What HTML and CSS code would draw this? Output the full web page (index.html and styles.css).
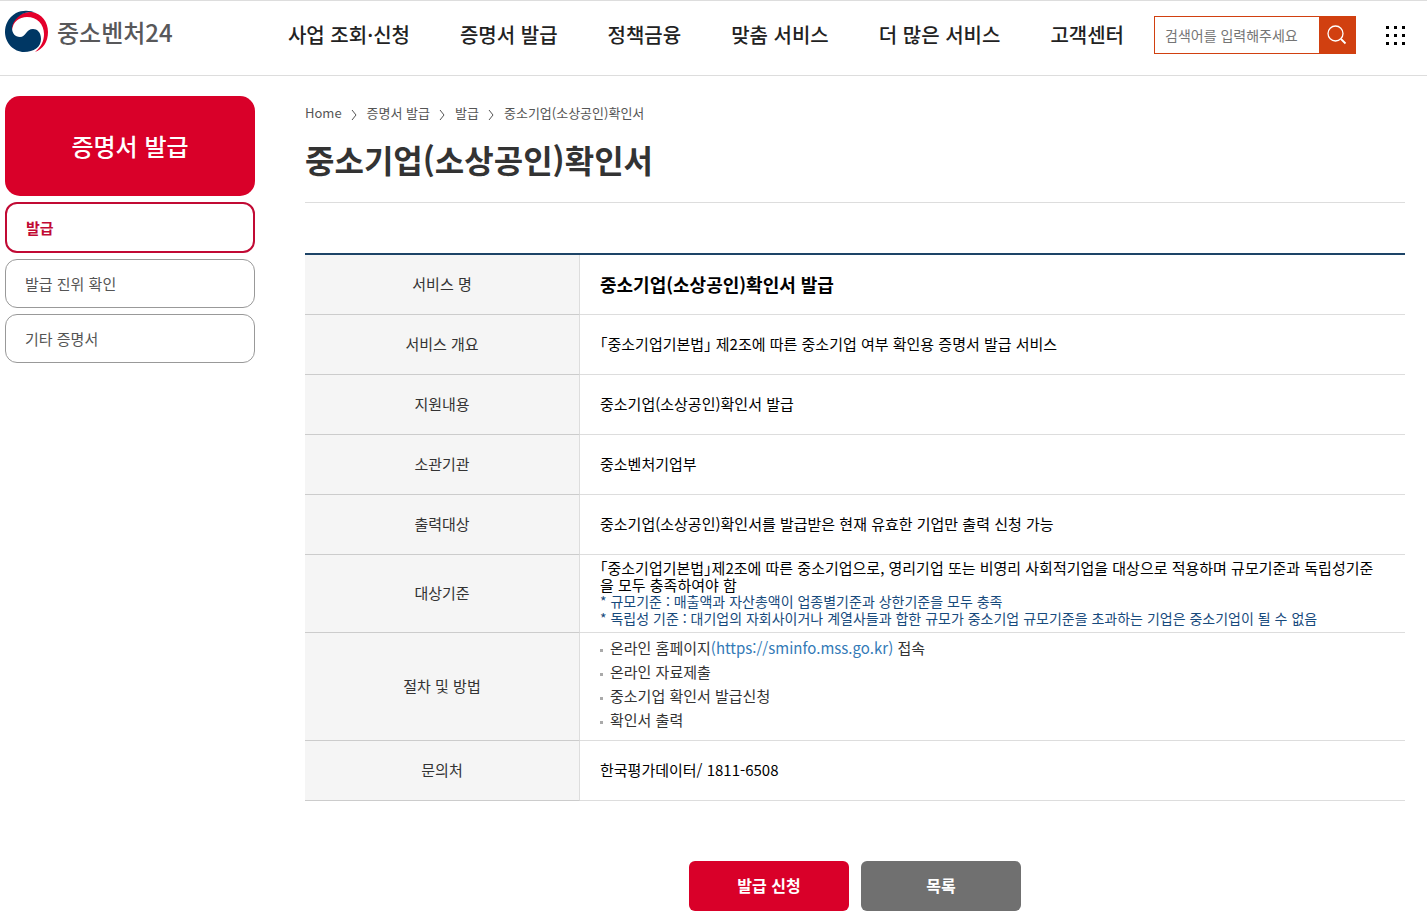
FILE: index.html
```html
<!DOCTYPE html>
<html lang="ko">

<head>
  <meta charset="UTF-8">
  <meta name="viewport" content="width=device-width, initial-scale=1.0">
  <title>중소기업(소상공인)확인서 | 중소벤처24</title>
  <link rel="stylesheet" href="styles.css">
</head>

<body>
  <header class="header">
    <a href="#" class="logo">
      <svg width="44" height="44" viewBox="0 0 44 44" aria-hidden="true">
        <path fill="#e4002b" d="M7 20 C6 9 14 2 27 2 C37 4 43 12 43 22 C43 32 38 39 30 42 C36 37 39 31 39 24 C39 14 32 7 22 7 C14 7 8 12 7 20Z" />
        <path fill="#003764" d="M31 3 C25 0 17 0 11 3 C3 8 0 15 0 22 C0 33 9 42 19 42 C29 42 36 37 36 29 C36 22 32 19 28 19 C21 19 21 27 15 27 C10 27 7 23 7 18 C8 10 15 3 24 2 C27 2 29 2 31 3Z" />
      </svg>
      <span>중소벤처24</span>
    </a>
    <nav class="gnb">
      <a href="#">사업 조회·신청</a>
      <a href="#">증명서 발급</a>
      <a href="#">정책금융</a>
      <a href="#">맞춤 서비스</a>
      <a href="#">더 많은 서비스</a>
      <a href="#">고객센터</a>
    </nav>
    <form class="search">
      <input type="text" placeholder="검색어를 입력해주세요" aria-label="검색어">
      <button type="button" aria-label="검색">
        <svg width="20" height="20" viewBox="0 0 20 20" fill="none" stroke="#fff" stroke-width="1.3">
          <circle cx="8.5" cy="8.5" r="7.5" />
          <path d="M14 14 L18.5 18.5" stroke-width="1.8" />
        </svg>
      </button>
    </form>
    <button type="button" class="allMenu" aria-label="전체메뉴">
      <svg width="19" height="19" viewBox="0 0 19 19">
        <path d="M0 0h3v3H0zM8 0h3v3H8zM16 0h3v3h-3zM0 8h3v3H0zM8 8h3v3H8zM16 8h3v3h-3zM0 16h3v3H0zM8 16h3v3H8zM16 16h3v3h-3z" />
      </svg>
    </button>
  </header>

  <div class="container">
    <aside class="side">
      <h2 class="sideTitle">증명서 발급</h2>
      <ul class="sideMenu">
        <li><a href="#" class="on">발급</a></li>
        <li><a href="#">발급 진위 확인</a></li>
        <li><a href="#">기타 증명서</a></li>
      </ul>
    </aside>

    <main class="content">
      <ol class="location">
        <li><a href="#">Home</a><svg class="arrow" viewBox="0 0 6 12"><path d="M1 1 L5 6 L1 11" /></svg></li>
        <li><a href="#">증명서 발급</a><svg class="arrow" viewBox="0 0 6 12"><path d="M1 1 L5 6 L1 11" /></svg></li>
        <li><a href="#">발급</a><svg class="arrow" viewBox="0 0 6 12"><path d="M1 1 L5 6 L1 11" /></svg></li>
        <li>중소기업(소상공인)확인서</li>
      </ol>
      <h1 class="pageTitle">중소기업(소상공인)확인서</h1>

      <table class="infoTable">
        <tr>
          <th scope="row">서비스 명</th>
          <td class="serviceName">중소기업(소상공인)확인서 발급</td>
        </tr>
        <tr>
          <th scope="row">서비스 개요</th>
          <td>「중소기업기본법」 제2조에 따른 중소기업 여부 확인용 증명서 발급 서비스</td>
        </tr>
        <tr>
          <th scope="row">지원내용</th>
          <td>중소기업(소상공인)확인서 발급</td>
        </tr>
        <tr>
          <th scope="row">소관기관</th>
          <td>중소벤처기업부</td>
        </tr>
        <tr>
          <th scope="row">출력대상</th>
          <td>중소기업(소상공인)확인서를 발급받은 현재 유효한 기업만 출력 신청 가능</td>
        </tr>
        <tr>
          <th scope="row">대상기준</th>
          <td class="standard">
            「중소기업기본법」제2조에 따른 중소기업으로, 영리기업 또는 비영리 사회적기업을 대상으로 적용하며 규모기준과 독립성기준을 모두 충족하여야 함
            <p class="note">* 규모기준 : 매출액과 자산총액이 업종별기준과 상한기준을 모두 충족</p>
            <p class="note">* 독립성 기준 : 대기업의 자회사이거나 계열사들과 합한 규모가 중소기업 규모기준을 초과하는 기업은 중소기업이 될 수 없음</p>
          </td>
        </tr>
        <tr>
          <th scope="row">절차 및 방법</th>
          <td class="process">
            <ul class="dotList">
              <li>온라인 홈페이지<a href="#">(https://sminfo.mss.go.kr)</a> 접속</li>
              <li>온라인 자료제출</li>
              <li>중소기업 확인서 발급신청</li>
              <li>확인서 출력</li>
            </ul>
          </td>
        </tr>
        <tr>
          <th scope="row">문의처</th>
          <td>한국평가데이터/ 1811-6508</td>
        </tr>
      </table>

      <div class="btnArea">
        <button type="button" class="btn btnRed">발급 신청</button>
        <button type="button" class="btn btnGray">목록</button>
      </div>
    </main>
  </div>
</body>

</html>
```
FILE: styles.css
```css
* {
  box-sizing: border-box;
  margin: 0;
  padding: 0;
}

body {
  background-color: #fff;
  color: #000;
  font-family: "Noto Sans CJK KR", sans-serif;
  font-size: 15px;
  line-height: 24px;
}

a {
  color: inherit;
  text-decoration: none;
}

ul,
ol {
  list-style: none;
}

button,
input {
  font-family: inherit;
}

button {
  border: 0;
  cursor: pointer;
}

.header {
  display: flex;
  align-items: center;
  height: 76px;
  padding: 0 22px 6px 5px;
  border-top: 1px solid #ddd;
  border-bottom: 1px solid #ddd;
}

.logo {
  display: flex;
  align-items: center;
  gap: 8px;
  padding-bottom: 6px;
  color: #58585a;
  font-size: 24px;
  font-weight: 500;
}

.gnb {
  display: flex;
  gap: 50px;
  margin-left: auto;
  color: #222;
  font-size: 20px;
  font-weight: 500;
  white-space: nowrap;
}

.search {
  display: flex;
  width: 202px;
  height: 38px;
  margin: 0 30px;
  border: 1px solid #d14010;
}

.search input {
  flex: 1;
  min-width: 0;
  padding: 0 10px;
  border: 0;
  font-size: 14px;
}

.search input::placeholder {
  color: #757575;
}

.search button {
  display: flex;
  align-items: center;
  justify-content: center;
  width: 36px;
  background-color: #d14010;
}

.allMenu {
  display: flex;
  background: none;
}

.container {
  display: flex;
  gap: 50px;
  padding: 20px 22px 7px 5px;
}

.side {
  width: 250px;
  flex-shrink: 0;
}

.sideTitle {
  display: flex;
  align-items: center;
  justify-content: center;
  height: 100px;
  border-radius: 15px;
  background-color: #d90029;
  color: #fff;
  font-size: 24px;
  font-weight: 500;
}

.sideMenu li {
  margin-top: 6px;
}

.sideMenu a {
  display: block;
  padding: 12px 19px;
  border: 1px solid #999;
  border-radius: 12px;
  color: #555;
  line-height: 23px;
}

.sideMenu .on {
  border: 2px solid #c10a34;
  color: #c10a34;
  font-weight: 700;
}

.content {
  flex: 1;
  min-width: 0;
}

.location {
  display: flex;
  padding: 5px 0;
  color: #555;
  font-size: 13px;
}

.location li {
  display: flex;
  align-items: center;
}

.arrow {
  width: 6px;
  height: 12px;
  margin: 3px 10px 0 9px;
  fill: none;
  stroke: #555;
}

.pageTitle {
  padding: 4px 0 18px;
  border-bottom: 1px solid #ddd;
  color: #333;
  font-size: 32px;
  font-weight: 700;
  line-height: 50px;
}

.infoTable {
  width: 100%;
  margin-top: 50px;
  border-top: 2px solid #1d4467;
  border-spacing: 0;
  table-layout: fixed;
}

.infoTable th,
.infoTable td {
  height: 60px;
  padding: 0 20px 2px;
  border-bottom: 1px solid #ddd;
}

.infoTable th {
  width: 25%;
  border-right: 1px solid #ddd;
  border-bottom-color: #ccc;
  background-color: #f5f5f5;
  color: #333;
  font-weight: 400;
}

/* half-width 「 」 */
.infoTable td {
  font-feature-settings: "halt";
}

.infoTable .serviceName {
  font-size: 18px;
  font-weight: 700;
}

.infoTable .standard {
  padding: 4px 20px 5px;
  line-height: 17px;
}

.note {
  color: #174a7c;
  font-size: 14px;
}

.infoTable .process {
  padding: 3px 20px 8px;
  color: #333;
}

.dotList li {
  display: flex;
  align-items: center;
  white-space: pre;
}

.dotList li::before {
  content: "";
  width: 3px;
  height: 3px;
  margin: 4px 7px 0 0;
  background-color: #aaa;
}

.dotList a {
  color: #337ab7;
}

.btnArea {
  display: flex;
  justify-content: center;
  gap: 12px;
  margin-top: 60px;
}

.btn {
  width: 160px;
  height: 50px;
  padding-bottom: 2px;
  border-radius: 6px;
  color: #fff;
  font-size: 16px;
  font-weight: 700;
}

.btnRed {
  background-color: #d90029;
}

.btnGray {
  background-color: #707070;
}
```
